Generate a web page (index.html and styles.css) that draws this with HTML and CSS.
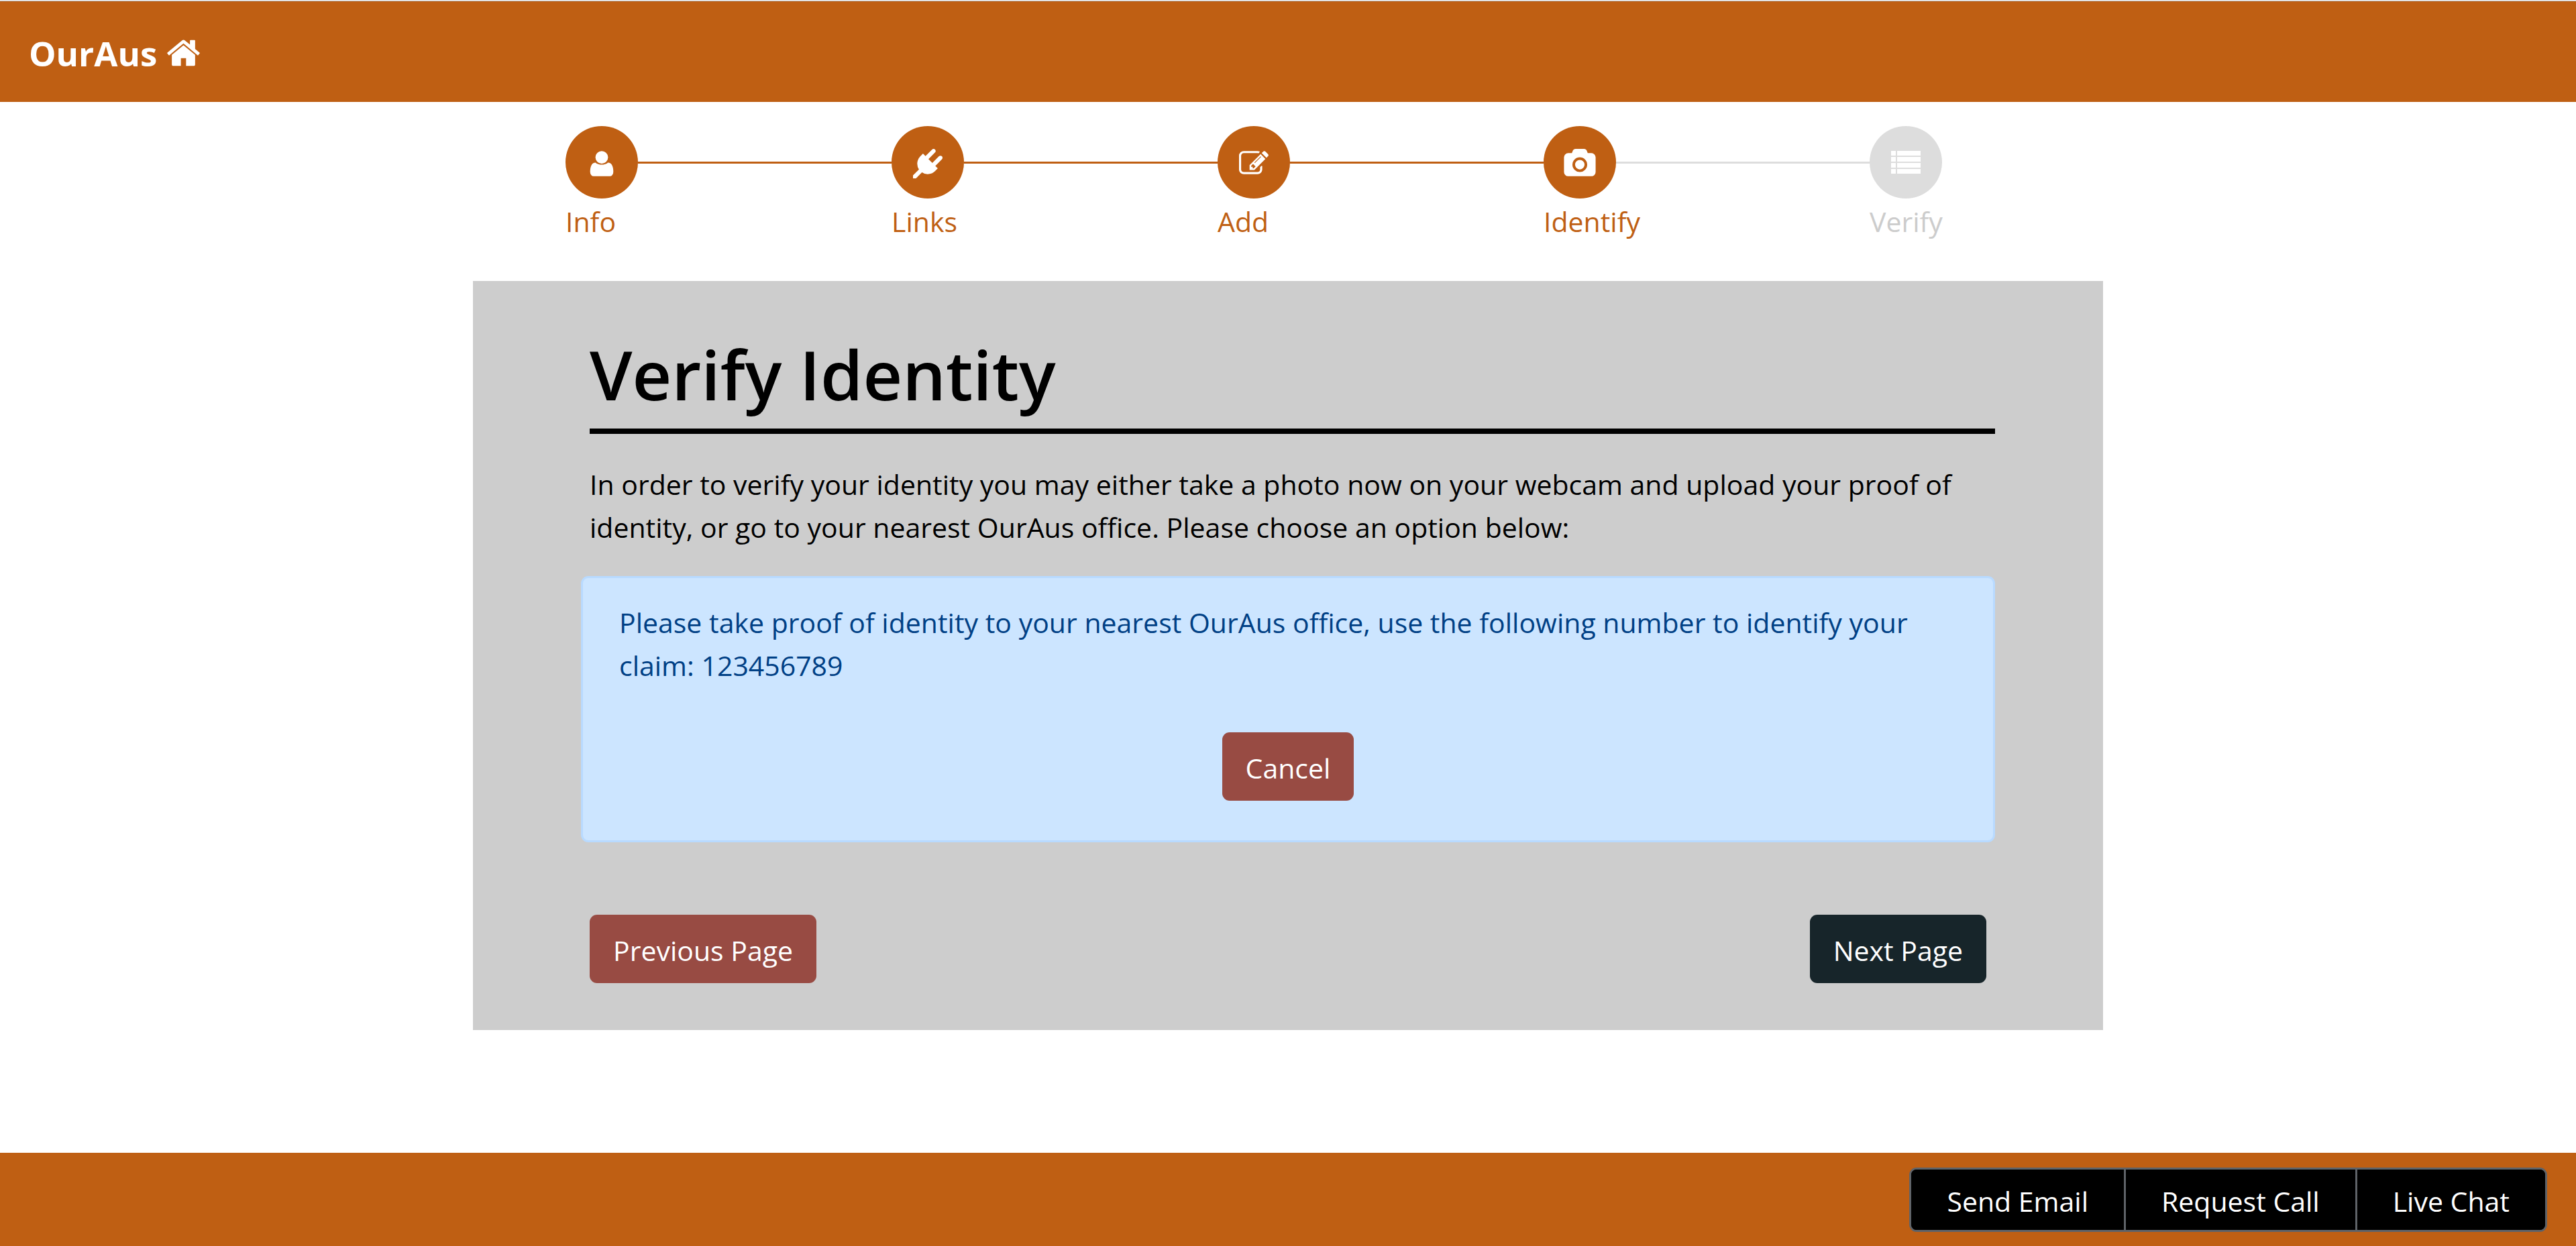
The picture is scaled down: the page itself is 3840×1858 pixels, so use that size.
FILE: index.html
```html
<!DOCTYPE html>
<html lang="en">
<head>
<meta charset="utf-8">
<meta name="viewport" content="width=device-width, initial-scale=1">
<title>OurAus - Verify Identity</title>
<link rel="stylesheet" href="styles.css">
</head>
<body>
<header class="topbar">
  <a class="brand" href="#">OurAus
    <svg class="brand-icon" viewBox="96 0 1600 1792" aria-hidden="true"><path d="M1472 992v480q0 26-19 45t-45 19h-384v-384h-256v384h-384q-26 0-45-19t-19-45v-480q0-1 .5-3t.5-3l575-474 575 474q1 2 1 6zm223-69l-62 74q-8 9-21 11h-3q-13 0-21-7l-692-577-692 577q-12 8-24 7-13-2-21-11l-62-74q-8-10-7-23.5t11-21.5l719-599q32-26 76-26t76 26l244 204v-195q0-14 9-23t23-9h192q14 0 23 9t9 23v408l219 182q10 8 11 21.5t-7 23.5z"/></svg>
  </a>
</header>

<main class="container">
  <ol class="steps">
    <li class="step">
      <span class="step-dot"><svg class="icon" viewBox="0 0 1792 1792" aria-hidden="true"><path d="M1600 1399q0 109-62.5 187t-150.5 78h-982q-88 0-150.5-78t-62.5-187q0-85 8.5-160.5t31.5-152 58.5-131 94-89 134.5-34.5q151 128 377 128t377-128q76 0 134.5 34.5t94 89 58.5 131 31.5 152 8.5 160.5zm-320-887q0 159-112.5 271.5t-271.5 112.5-271.5-112.5-112.5-271.5 112.5-271.5 271.5-112.5 271.5 112.5 112.5 271.5z"/></svg></span>
      <span class="step-label">Info</span>
    </li>
    <li class="step">
      <span class="step-dot"><svg class="icon" viewBox="0 0 1792 1792" aria-hidden="true"><path d="M1755 453q37 38 37 90.5t-37 90.5l-401 400 150 150-160 160q-163 163-389.5 186.5t-411.5-100.5l-362 362h-181v-181l362-362q-124-185-100.5-411.5t186.5-389.5l160-160 150 150 400-401q38-37 91-37t90 37 37 90.5-37 90.5l-400 401 234 234 401-400q38-37 91-37t90 37z"/></svg></span>
      <span class="step-label">Links</span>
    </li>
    <li class="step">
      <span class="step-dot"><svg class="icon" viewBox="0 0 1792 1792" aria-hidden="true"><path d="M888 1184l116-116-152-152-116 116v56h96v96h56zm440-720q-16-16-33 1l-350 350q-17 17-1 33t33-1l350-350q17-17 1-33zm80 594v190q0 119-84.5 203.5t-203.5 84.5h-832q-119 0-203.5-84.5t-84.5-203.5v-832q0-119 84.5-203.5t203.5-84.5h832q63 0 117 25 15 7 18 23 3 17-9 29l-49 49q-14 14-32 8-23-6-45-6h-832q-66 0-113 47t-47 113v832q0 66 47 113t113 47h832q66 0 113-47t47-113v-126q0-13 9-22l64-64q15-15 35-7t20 29zm-96-738l288 288-672 672h-288v-288zm444 132l-92 92-288-288 92-92q28-28 68-28t68 28l152 152q28 28 28 68t-28 68z"/></svg></span>
      <span class="step-label">Add</span>
    </li>
    <li class="step current" aria-current="step">
      <span class="step-dot"><svg class="icon" viewBox="0 0 1792 1792" aria-hidden="true"><path d="M896 672q119 0 203.5 84.5t84.5 203.5-84.5 203.5-203.5 84.5-203.5-84.5-84.5-203.5 84.5-203.5 203.5-84.5zm704-416q106 0 181 75t75 181v896q0 106-75 181t-181 75h-1408q-106 0-181-75t-75-181v-896q0-106 75-181t181-75h224l51-136q19-49 69.5-84.5t103.5-35.5h512q53 0 103.5 35.5t69.5 84.5l51 136h224zm-704 1152q185 0 316.5-131.5t131.5-316.5-131.5-316.5-316.5-131.5-316.5 131.5-131.5 316.5 131.5 316.5 316.5 131.5z"/></svg></span>
      <span class="step-label">Identify</span>
    </li>
    <li class="step pending">
      <span class="step-dot"><svg class="icon" viewBox="0 0 44 44" aria-hidden="true"><path d="M0 3h7v7H0zM9 3h35v7H9zM0 12h7v7H0zM9 12h35v7H9zM0 21h7v7H0zM9 21h35v7H9zM0 30h7v7H0zM9 30h35v7H9z"/></svg></span>
      <span class="step-label">Verify</span>
    </li>
  </ol>

  <section class="card">
    <h1 class="title">Verify Identity</h1>
    <p class="intro">In order to verify your identity you may either take a photo now on your webcam and upload your proof of identity, or go to your nearest OurAus office. Please choose an option below:</p>
    <div class="notice" role="alert">
      <p class="notice-text">Please take proof of identity to your nearest OurAus office, use the following number to identify your claim: 123456789</p>
      <button class="btn btn-red" type="button">Cancel</button>
    </div>
    <div class="pager">
      <button class="btn btn-red" type="button">Previous Page</button>
      <button class="btn btn-dark" type="button">Next Page</button>
    </div>
  </section>
</main>

<footer class="bottombar">
  <div class="contact" role="group" aria-label="Contact us">
    <button class="contact-btn" type="button">Send Email</button>
    <button class="contact-btn" type="button">Request Call</button>
    <button class="contact-btn" type="button">Live Chat</button>
  </div>
</footer>
</body>
</html>
```
FILE: styles.css
```css
:root {
  --orange: #bf5f13;
  --grey: #dddddd;
}

* {
  box-sizing: border-box;
}

body {
  display: flex;
  flex-direction: column;
  min-height: 100vh;
  margin: 0;
  padding-top: 1px;
  background: #fff;
  color: #000;
  font-family: "Segoe UI", "Open Sans", "Noto Sans", sans-serif;
  font-size: 41px;
  line-height: 64px;
}

.topbar {
  display: flex;
  align-items: center;
  height: 151px;
  padding: 4px 43px 0;
  border-top: 1px solid #b4b4b4;
  background: var(--orange);
}

.brand {
  display: flex;
  align-items: center;
  gap: 15px;
  color: #fff;
  font-size: 51px;
  font-weight: 700;
  text-decoration: none;
}

.brand-icon {
  width: 49px;
  height: 54px;
  fill: currentColor;
}

.container {
  width: 100%;
  max-width: 2430px;
  margin: 0 auto;
  padding-top: 36px;
}

.steps {
  display: flex;
  margin: 0;
  padding: 0 240px 0 138px;
  list-style: none;
}

.step {
  flex: 1;
  display: grid;
  grid-template-columns: 108px 1fr;
  row-gap: 2px;
  align-items: center;
  color: var(--orange);
}

.step::after {
  content: "";
  grid-area: 1 / 2;
  height: 3px;
  background: currentColor;
}

.step.current::after {
  background: var(--grey);
}

.step:last-child {
  flex: 0 0 108px;
}

.step:last-child::after {
  content: none;
}

.step-dot {
  display: flex;
  align-items: center;
  justify-content: center;
  width: 108px;
  height: 108px;
  padding-top: 4px;
  border-radius: 50%;
  background: var(--orange);
  color: #fff;
}

.icon {
  width: 44px;
  height: 44px;
  overflow: visible;
  fill: currentColor;
}

.step-label {
  grid-area: 2 / 1 / 3 / 3;
  white-space: nowrap;
}

.step.pending {
  color: #cccccc;
}

.pending .step-dot {
  background: var(--grey);
}

.card {
  margin-top: 57px;
  padding: 74px 161px 70px 174px;
  background: #cdcdcd;
}

.title {
  margin: 0 0 43px;
  padding-bottom: 16px;
  border-bottom: 8px solid #000;
  font-size: 102px;
  font-weight: 600;
  line-height: 130px;
}

.intro {
  margin: 0 0 41px;
}

.notice {
  margin: 0 0 108px -13px;
  padding: 34px 54px 59px;
  border: 3px solid #b8daff;
  border-radius: 11px;
  background: #cce5ff;
  color: #004085;
  text-align: center;
}

.notice-text {
  margin: 0 0 68px;
  text-align: left;
}

.btn {
  height: 102px;
  padding: 3px 35px 0;
  border: 0;
  border-radius: 11px;
  color: #fff;
  font: inherit;
}

.btn-red {
  background: #984b43;
}

.btn-dark {
  background: #17252a;
}

.pager {
  display: flex;
  justify-content: space-between;
  padding-right: 13px;
}

.bottombar {
  display: flex;
  justify-content: flex-end;
  margin-top: auto;
  padding: 22px 43px 21px;
  background: var(--orange);
}

.contact {
  display: flex;
  border: 3px solid #5f6368;
  border-radius: 11px;
  background: #000;
  overflow: hidden;
}

.contact-btn {
  height: 90px;
  padding: 3px 53px 0;
  border: 0;
  background: #000;
  color: #fff;
  font: inherit;
}

.contact-btn + .contact-btn {
  border-left: 3px solid #5f6368;
}
```
